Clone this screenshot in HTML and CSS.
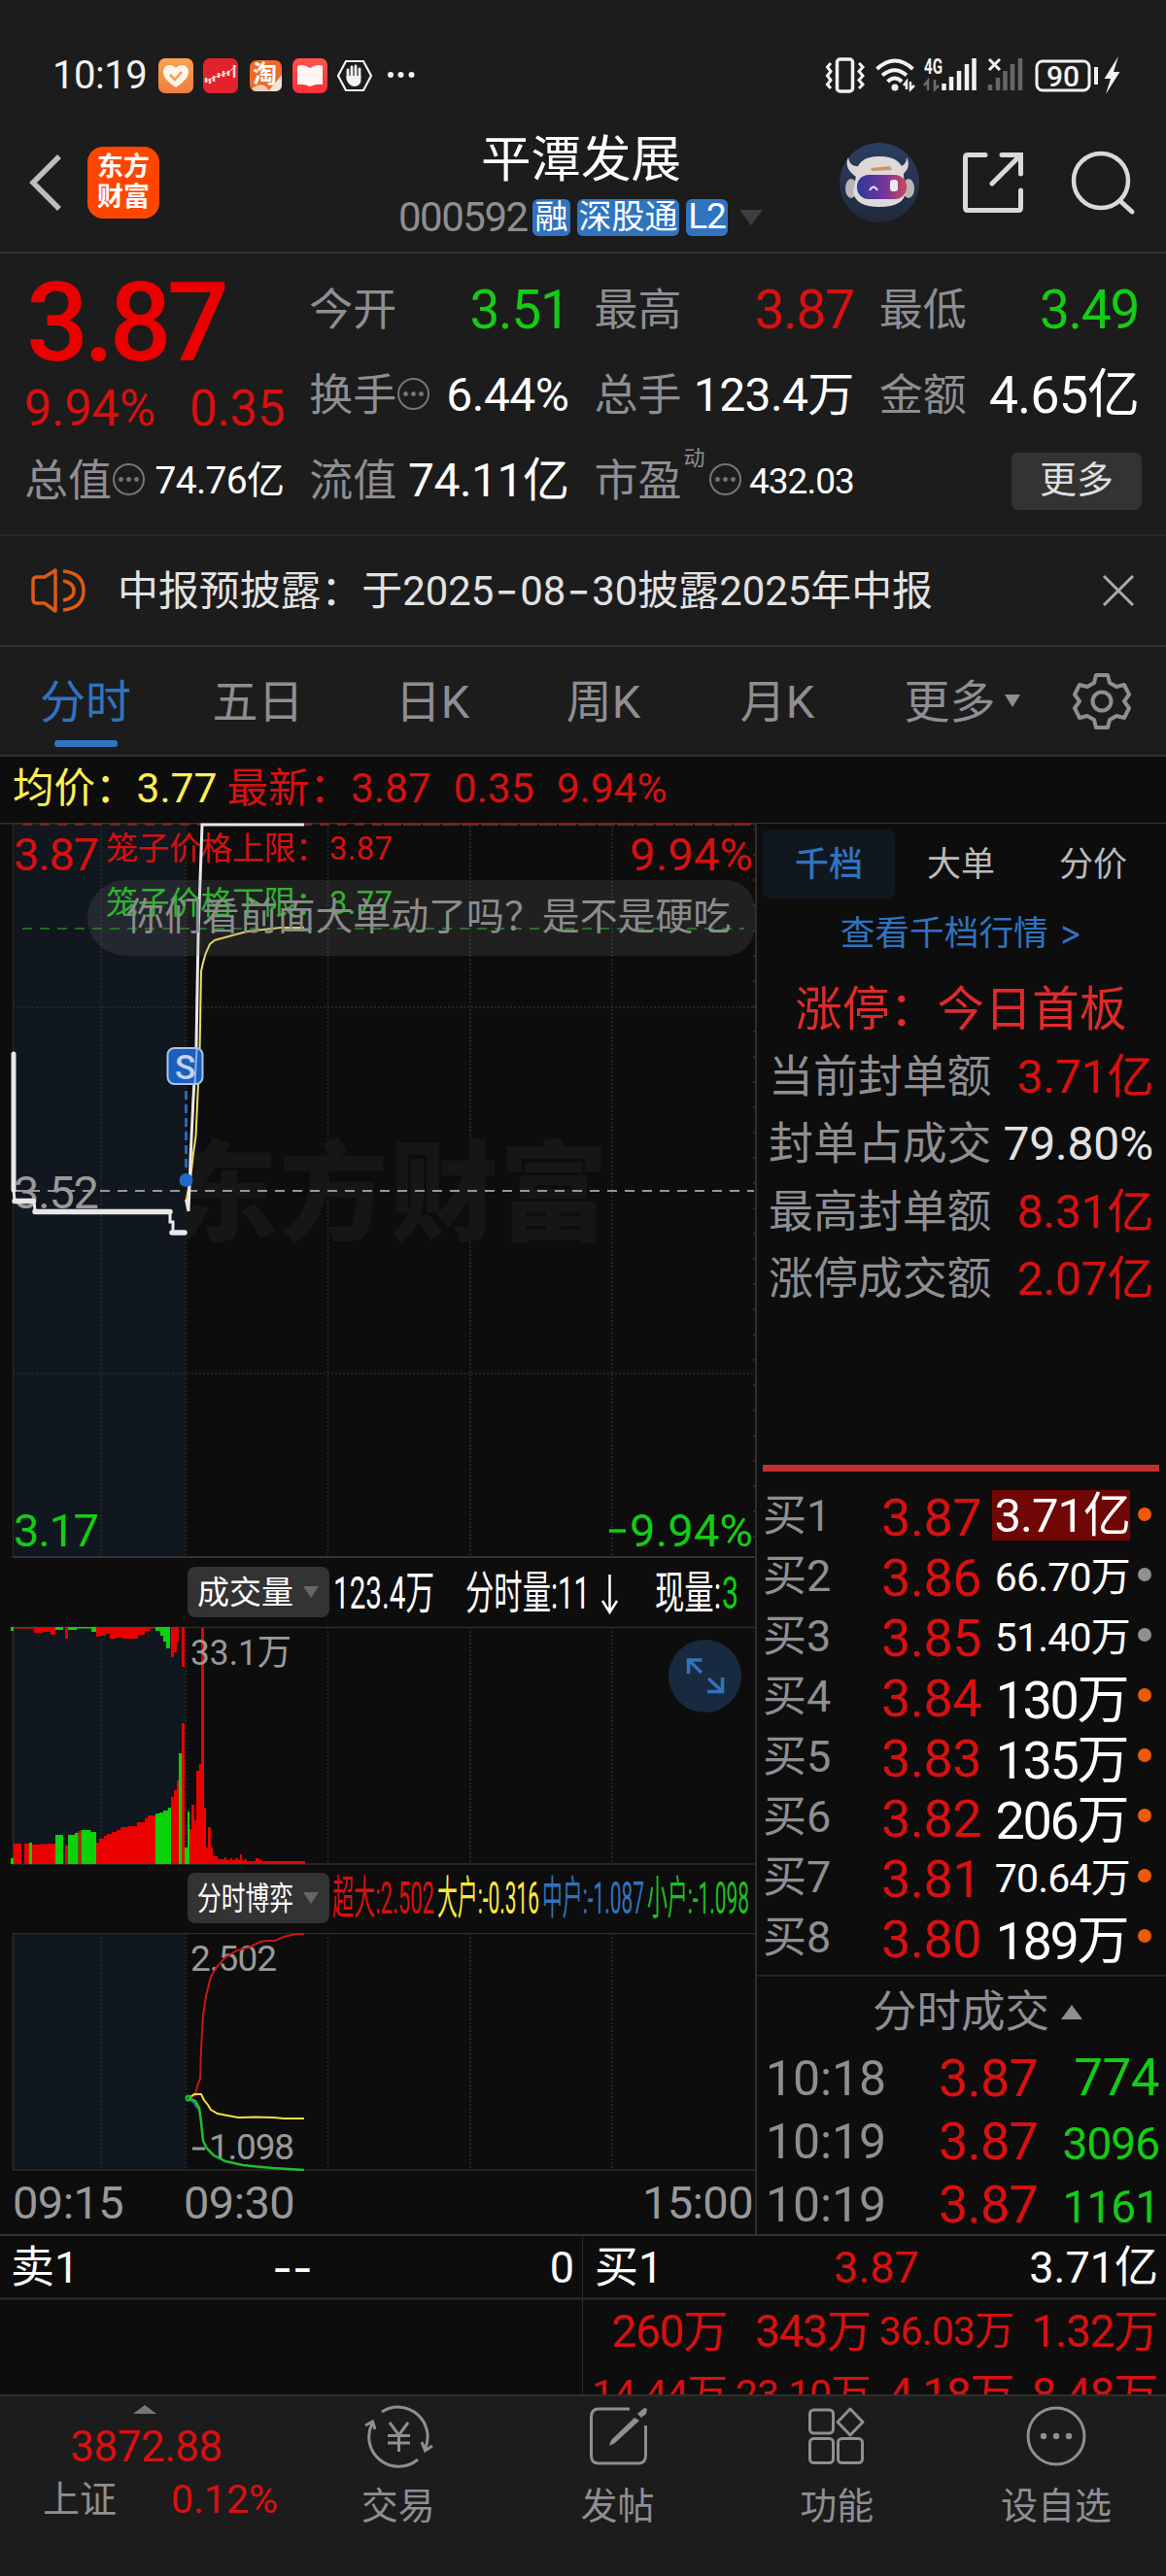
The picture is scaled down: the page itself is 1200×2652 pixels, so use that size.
FILE: index.html
```html
<!DOCTYPE html>
<html lang="zh-CN">
<head>
  <meta charset="UTF-8">
  <meta name="viewport" content="width=device-width, initial-scale=1.0">
  <title>平潭发展 000592</title>
  <link rel="stylesheet" href="styles.css">
</head>
<body>
  <div class="statusbar">
    <span class="clock">10:19</span>
    <svg class="status-left" width="270" height="44" viewBox="160 56 270 44">
      <defs>
        <linearGradient id="gOrange" x1="0" y1="0" x2="0" y2="1"><stop offset="0" stop-color="#f9a252"/><stop offset="1" stop-color="#f27c41"/></linearGradient>
        <linearGradient id="gRed" x1="0" y1="0" x2="0" y2="1"><stop offset="0" stop-color="#ff5350"/><stop offset="1" stop-color="#fb2f38"/></linearGradient>
      </defs>
      <rect x="163" y="60" width="36" height="36" rx="7" fill="url(#gOrange)"/>
      <path d="M181 90 C172 84 168 79 168 74 C168 66 177 65 181 70 C185 65 194 66 194 74 C194 79 190 84 181 90Z" fill="#fff6e8"/>
      <path d="M175 77 L180 82 L187 74" fill="none" stroke="#f59a55" stroke-width="2.5"/>
      <rect x="209" y="60" width="36" height="36" rx="7" fill="#e3232b"/>
      <path d="M212 85 V80 M216 86 V81 M220 84 V78 M225 80 V75 M230 79 V73 M235 78 V73 M241 80 V67" stroke="#ffd9d9" stroke-width="2.5" fill="none"/>
      <path d="M212 83 L225 78 L234 75 L243 68" stroke="#ffd9d9" stroke-width="1" fill="none"/>
      <rect x="257" y="62" width="33" height="32" rx="7" fill="#ee6a26"/>
      <path d="M290 77 L276 94 H283 Q290 94 290 87Z" fill="#f3e4d8"/>
      <path d="M259 91 Q272 82 277 94 H263Q260 94 259 91Z" fill="#f0cdb8"/>
      <text x="260" y="85" class="tao">淘</text>
      <rect x="301" y="60" width="36" height="36" rx="7" fill="url(#gRed)"/>
      <path d="M306 68 Q312 65 319 70 Q326 65 332 68 V87 Q326 86 319 89 Q312 86 306 87Z" fill="#fff5f3"/>
      <path d="M356 63 H374 L382 78 L374 93 H356 L348 78Z" fill="none" stroke="#f2f2f2" stroke-width="2.2"/>
      <path d="M358 80 V72 M362 80 V69 M366 80 V68 M370 80 V71" stroke="#f2f2f2" stroke-width="2.8" stroke-linecap="round"/>
      <path d="M356.6 78 H371.4 V84 Q370 89 364 89 Q359 88 356.6 82Z" fill="#f2f2f2"/>
      <circle cx="402" cy="77" r="3" fill="#f2f2f2"/><circle cx="412.500" cy="77" r="3" fill="#f2f2f2"/><circle cx="423.500" cy="77" r="3" fill="#f2f2f2"/>
    </svg>
    <svg class="status-right" width="310" height="44" viewBox="846 56 310 44">
      <g fill="none" stroke="#f2f2f2" stroke-width="3.500">
        <rect x="861.500" y="61" width="16" height="33" rx="3"/>
        <path d="M855 65 L851.500 69 L855 73.500 L851.500 78 L855 82.500 L851.500 87 L855 91 M884 65 L888 69 L884 73.500 L888 78 L884 82.500 L888 87 L884 91" stroke-width="3"/>
        <path d="M902.500 71 Q921 54 939.500 71 M908 77.500 Q921 67 933 77.500 M913.500 84 Q921 77 928 84" stroke-width="4"/>
        <rect x="1067" y="63" width="54" height="30" rx="6" stroke-width="3"/>
        <path d="M1018 61 L1029 72 M1029 61 L1018 72" stroke-width="3"/>
      </g>
      <circle cx="921" cy="90" r="3.500" fill="#f2f2f2"/>
      <path d="M933 92 V84 L930 88 M937 84 V92 L941 88" stroke="#f2f2f2" stroke-width="2.500" fill="none"/>
      <path d="M955 93 V83 L951 88 M962 82 V92 L966 88" stroke="#6b6b6b" stroke-width="2.500" fill="none"/>
      <text x="951" y="76" class="net" textLength="19" lengthAdjust="spacingAndGlyphs">4G</text>
      <path d="M971.500 93 V86 M979 93 V79 M987 93 V73 M995 93 V66 M1002.500 93 V60" stroke="#f2f2f2" stroke-width="4.500"/>
      <path d="M1019 93 V87 M1027 93 V80 M1034.500 93 V73 M1042 93 V66 M1050 93 V60" stroke="#666" stroke-width="4.500"/>
      <text x="1094" y="88.500" class="batt" text-anchor="middle">90</text>
      <path d="M1128 69 V87" stroke="#f2f2f2" stroke-width="4"/>
      <path d="M1151 58 L1136.500 81 H1143 L1138 97 L1152.500 74 H1146Z" fill="#f2f2f2"/>
    </svg>
  </div>

  <div class="header">
    <svg class="back" width="36" height="62" viewBox="28 157 36 62"><path d="M61 161 L34 188 L61 215" fill="none" stroke="#bdbdbd" stroke-width="5.500"/></svg>
    <div class="logo">东方<br>财富</div>
    <div class="title-box">
      <div class="name">平潭发展</div>
      <div class="code-row">
        <span class="code">000592</span>
        <span class="tag tag-rong">融</span>
        <span class="tag tag-sgt">深股通</span>
        <span class="tag tag-l2">L2</span>
        <span class="caret"></span>
      </div>
    </div>
    <svg class="robot" width="82" height="82" viewBox="0 0 82 82">
      <defs>
        <linearGradient id="gBg" x1="0" y1="0" x2="0" y2="1"><stop offset="0" stop-color="#2b3d60"/><stop offset="1" stop-color="#202a3c"/></linearGradient>
        <linearGradient id="gVisor" x1="0" y1="0" x2="1" y2="0"><stop offset="0" stop-color="#2c3a9c"/><stop offset=".55" stop-color="#74359c"/><stop offset="1" stop-color="#c94a5c"/></linearGradient>
      </defs>
      <circle cx="41" cy="41" r="41" fill="url(#gBg)"/>
      <path d="M9 15 Q4 26 17 35 L23 24 Q10 26 9 15Z M69 15 Q75 26 62 35 L57 24 Q69 26 69 15Z" fill="#d9d6d4"/>
      <ellipse cx="12" cy="47" rx="6" ry="10" fill="#b9b6b8"/><ellipse cx="71" cy="47" rx="6" ry="10" fill="#b9b6b8"/>
      <path d="M17 34 Q17 14 41 14 Q66 14 66 34 L68 50 Q67 66 41 66 Q16 66 14 50Z" fill="#dddad9"/>
      <rect x="18" y="33" width="51" height="25" rx="12" fill="url(#gVisor)"/>
      <path d="M31 49 Q35 42 39 49" fill="none" stroke="#dfe0ff" stroke-width="2"/>
      <rect x="52" y="38" width="8" height="12" rx="3" fill="#efe9f5"/>
      <path d="M32 26 L52 24 L54 28 L33 29Z" fill="#c9976d"/>
    </svg>
    <svg class="share" width="66" height="66" viewBox="989 155 66 66">
      <path d="M1014 159.500 H996 Q993.500 159.500 993.500 162 V214 Q993.500 216.500 996 216.500 H1048 Q1050.500 216.500 1050.500 214 V196 M1031 159.500 H1050.500 V179 M1050 160 L1021 189" fill="none" stroke="#d9d9d9" stroke-width="5" stroke-linecap="round"/>
    </svg>
    <svg class="search" width="68" height="68" viewBox="1102 153 68 68">
      <circle cx="1133" cy="185" r="28" fill="none" stroke="#d9d9d9" stroke-width="4.500"/>
      <path d="M1153 206 L1165 217" stroke="#d9d9d9" stroke-width="5" stroke-linecap="round"/>
    </svg>
  </div>

  <div class="quote">
    <div class="q-price">
      <div class="big">3.87</div>
      <div class="chg"><span>9.94%</span><span>0.35</span></div>
    </div>
    <div class="q"><label>今开</label><b class="v54 green">3.51</b></div>
    <div class="q"><label>最高</label><b class="v54 red">3.87</b></div>
    <div class="q"><label>最低</label><b class="v54 green">3.49</b></div>
    <div class="q"><label>换手</label><i class="dots"></i><b class="v48">6.44%</b></div>
    <div class="q"><label>总手</label><b class="v47">123.4万</b></div>
    <div class="q"><label>金额</label><b class="v53">4.65亿</b></div>
    <div class="q"><label>总值</label><i class="dots"></i><b class="v39">74.76亿</b></div>
    <div class="q"><label>流值</label><b class="v48 tight">74.11亿</b></div>
    <div class="q"><label>市盈</label><sup>动</sup><i class="dots"></i><b class="v36">432.03</b></div>
    <div class="q q-end"><span class="more-btn">更多</span></div>
  </div>

  <div class="notice">
    <svg width="58" height="50" viewBox="31 583 58 50">
      <path d="M57 587 L46 594 H38 Q34 594 34 598 V617 Q34 621 38 621 H46 L57 629Z M65 588 Q86 590 86 608 Q86 626 65 628 M65 598 Q76 600 76 608 Q76 616 65 618" fill="none" stroke="#dc5b14" stroke-width="3.500" stroke-linejoin="round"/>
    </svg>
    <span class="notice-text">中报预披露：于2025<i>-</i>08<i>-</i>30披露2025年中报</span>
    <svg class="close" width="36" height="36" viewBox="0 0 36 36"><path d="M3 3 L33 33 M33 3 L3 33" stroke="#ababab" stroke-width="3"/></svg>
  </div>

  <div class="tabs">
    <span class="tab on">分时</span>
    <span class="tab">五日</span>
    <span class="tab">日K</span>
    <span class="tab">周K</span>
    <span class="tab">月K</span>
    <span class="tab tab-more">更多<i></i></span>
    <svg class="gear" width="60" height="60" viewBox="0 0 60 60">
      <path d="M24 3 H36 L38 11 L45 15 L53 13 L58 23 L53 30 L58 37 L53 47 L45 45 L38 49 L36 57 H24 L22 49 L15 45 L7 47 L2 37 L7 30 L2 23 L7 13 L15 15 L22 11Z" fill="none" stroke="#8e8e93" stroke-width="4" stroke-linejoin="round"/>
      <circle cx="30" cy="30" r="9.500" fill="none" stroke="#8e8e93" stroke-width="4"/>
    </svg>
  </div>

  <div class="avg-row">
    <span class="yellow">均价：3.77</span>
    <span class="red">最新：3.87</span>
    <span class="red">0.35</span>
    <span class="red">9.94%</span>
  </div>

  <div class="main">
    <div class="charts">
      <div class="price-box">
      <svg class="chart" width="777" height="757" viewBox="0 847 777 757">
        <rect x="13" y="847" width="178" height="757" fill="#10171f"/>
        <path class="wm-grid" d="M104 847 V1604 M191.500 847 V1604 M337.500 847 V1604 M484 847 V1604 M630 847 V1604 M13 1037 H776 M13 1414 H776"/>
        <text x="174" y="1269" class="wm" textLength="452">东方财富</text>
        <path d="M13.500 847 V1604" stroke="#2b2e31" stroke-width="1"/>
        <path d="M0 847.500 H777 M13 1603 H777" stroke="#333" stroke-width="2"/>
        <path d="M23 848.500 H395" stroke="#7c2020" stroke-width="3" stroke-dasharray="10 8"/>
        <path d="M395 848.500 H776" stroke="#7c2020" stroke-width="3" stroke-dasharray="18 2"/>
        <path d="M776 853 V1600" stroke="#5c1414" stroke-width="2" stroke-dasharray="2 24"/>
        <path d="M23 956 H766" stroke="#1e6b22" stroke-width="2" stroke-dasharray="10 8"/>
        <path d="M13 1226 H776" stroke="#979797" stroke-width="2" stroke-dasharray="10 8"/>
        <g class="t46">
          <text x="14" y="896" class="f-red" textLength="88">3.87</text>
          <text x="775" y="896" class="f-red" text-anchor="end" textLength="127">9.94%</text>
          <text x="14" y="1244" fill="#999" textLength="88">3.52</text>
          <text x="14" y="1592" class="f-green" textLength="88">3.17</text>
          <text x="775" y="1592" class="f-green" text-anchor="end" textLength="127">9.94%</text>
          <path d="M627 1576 H644" stroke="#14cc14" stroke-width="3.500"/>
        </g>
        <g class="t33">
          <text x="109" y="885" class="f-red" textLength="228">笼子价格上限：</text><text x="339" y="885" class="f-red" textLength="65">3.87</text>
          <text x="109" y="941" class="f-green2" textLength="228">笼子价格下限：</text><text x="339" y="941" class="f-green2" textLength="65">3.77</text>
        </g>
        <path d="M191.500 1237 L196.500 1210 L199 1187 L201.500 1170 L205.500 1083 L207 1000 L208.500 993 L211.500 982 L216 972 L221 968 L239 963 L254 959 L271 957 L289 955 L313 955" fill="none" stroke="#ede05a" stroke-width="2"/>
        <path d="M14 1084 V1225 L15 1236 H35 L36 1247 H175 V1258 H178 V1269 H191" fill="none" stroke="#e8e8e8" stroke-width="3"/>
        <path d="M14 1085 V1225" stroke="#e8e8e8" stroke-width="5" stroke-linecap="round"/>
        <path d="M15 1236.500 H34 M36 1247.500 H175 M177 1269 H190" stroke="#e8e8e8" stroke-width="5.500" stroke-linecap="round"/>
        <path d="M191.500 1235 L194 1247 L196.500 1182 L199 1130 L202 1077 L204 963 L208 849 H313" fill="none" stroke="#e8e8e8" stroke-width="3"/>
        <path d="M191.500 1123 V1206" stroke="#2268c8" stroke-width="3" stroke-dasharray="9 5"/>
        <circle cx="191.500" cy="1215" r="7" fill="#2268c8"/>
        <rect x="172.500" y="1079" width="36" height="37" rx="7" fill="#1b5fbd" stroke="#a9c3e8" stroke-width="2"/>
        <path d="M202.500 1080 L200.500 1115" stroke="#8fb2ea" stroke-width="2"/>
        <text x="190.500" y="1111" class="s-mark" text-anchor="middle">S</text>
      </svg>
      <div class="danmu">你们看前面大单动了吗？是不是硬吃</div>
      </div>

      <div class="sub-head">
        <span class="picker"><em class="cjk33">成交量</em><i></i></span>
        <svg class="legend" width="436" height="60" viewBox="341 1609 436 60">
          <g class="t46" fill="#fff">
            <text x="343" y="1656" textLength="104" lengthAdjust="spacingAndGlyphs">123.4万</text>
            <text x="479" y="1656" textLength="128" lengthAdjust="spacingAndGlyphs">分时量:11</text>
            <path d="M627.500 1621 V1660 M620 1648 L627.500 1660 L635 1648" fill="none" stroke="#fff" stroke-width="2.500"/>
            <text x="674" y="1656" textLength="68" lengthAdjust="spacingAndGlyphs">现量:</text>
            <text x="743" y="1656" class="f-green" textLength="17" lengthAdjust="spacingAndGlyphs">3</text>
          </g>
        </svg>
      </div>

      <div class="price-box">
      <svg class="chart" width="777" height="246" viewBox="0 1674 777 246">
        <rect x="13" y="1675" width="178" height="244" fill="#10171f"/>
        <path class="wm-grid" d="M104 1675 V1919 M191.500 1675 V1919 M337.500 1675 V1919 M484 1675 V1919 M630 1675 V1919"/>
        <path d="M13.500 1675 V1919 M13 1675.500 H777 M13 1919 H777" stroke="#2c2c2c" stroke-width="1.500"/>
        <!-- matched volume, from the bottom -->
        <path fill="#eb0000" d="M14 1919 V1898 H22 V1919Z M25 1919 V1898 H30 V1919Z M33 1919 V1899 H41 V1898.500 H49 V1898 H57 V1919Z M67 1919 V1900 H70 V1919Z M80.500 1919 V1885 H83.500 V1919Z
          M99 1919 V1897 H102 V1893 H107 V1890 H110 V1888 H115 V1886 H120 V1884 H124 V1881 H132 V1880 H141 V1876 H149 V1872 H152 V1869 H160 V1919Z
          M176 1919 V1850 H179 V1843 H182 V1833 H184 V1919Z M187 1919 V1774 H190 V1919Z
          M195 1919 V1883 H197 V1858 H200 V1874 H202 V1823 H205 V1816 H207 V1676 H210 V1861 H212 V1902 H214 V1881 H217 V1902 H219 V1911 H224 V1914 H231 V1912 H233 V1915 H237 V1913 H239 V1915 H242 V1913 H245 V1915 H247 V1909 H249 V1915 H252 V1914 H254 V1916 H263 V1913 H267 V1915 H270 V1916 H314 V1919Z"/>
        <path fill="#0bd30b" d="M11 1919 V1913 H14 V1919Z M30 1919 V1897 H33 V1919Z M57 1919 V1889 H65 V1919Z M70 1919 V1889 H77 V1887 H80.500 V1919Z M83.500 1919 V1884 H93.500 V1886 H99 V1919Z
          M160 1919 V1867 H164 V1866 H168 V1864 H173 V1861 H176 V1919Z M184 1919 V1805 H187 V1919Z M190 1919 V1902 H193 V1865 H195 V1919Z"/>
        <!-- unmatched volume, hanging from the top -->
        <path fill="#eb0000" d="M14 1675 H35 V1676.500 H14Z M35 1675 H57 V1683 H52 V1680 H44 V1681 H35Z M67 1675 H70 V1687 H67Z M99 1675 H162 V1676.500 H154 V1679 H149 V1683 H142 V1687 H126 V1686 H120 V1687 H113 V1682 H109 V1684 H102 V1685 H99Z M176 1675 H184 V1690 H182 V1701 H179 V1706 H176Z M187 1675 H190 V1716 H187Z"/>
        <path fill="#0bd30b" d="M11 1675 H14 V1679 H11Z M57 1675 H65 V1678 H57Z M70 1675 H99 V1680 H94 V1676.500 H79 V1678 H70Z M160 1675 H175 V1697 H171 V1690 H168 V1684 H165 V1679 H160Z"/>
        <text x="196" y="1714" class="t37" textLength="104" lengthAdjust="spacingAndGlyphs">33.1万</text>
        <circle cx="725.500" cy="1725.500" r="37.500" fill="#182a40"/>
        <path d="M708.500 1723 V1709 H722.500 M709 1709.500 L722 1722 M743.500 1727 V1741.500 H728 M743 1741 L729 1728" fill="none" stroke="#3073bf" stroke-width="3.500"/>
      </svg>
      </div>

      <div class="sub-head sub-head2">
        <span class="picker"><em class="cjk33 four">分时博弈</em><i></i></span>
        <svg class="legend" width="436" height="60" viewBox="341 1923 436 60">
          <g class="t48">
            <text x="342" y="1969" class="f-red" textLength="105" lengthAdjust="spacingAndGlyphs">超大:2.502</text>
            <text x="450" y="1969" fill="#ffe93b" textLength="105" lengthAdjust="spacingAndGlyphs">大户:-0.316</text>
            <text x="558" y="1969" fill="#3073bf" textLength="105" lengthAdjust="spacingAndGlyphs">中户:-1.087</text>
            <text x="666" y="1969" class="f-green2" textLength="105" lengthAdjust="spacingAndGlyphs">小户:-1.098</text>
          </g>
        </svg>
      </div>

      <svg class="chart" width="777" height="245" viewBox="0 1990 777 245">
        <rect x="13" y="1990" width="178" height="244" fill="#10171f"/>
        <path class="wm-grid" d="M104 1990 V2234 M191.500 1990 V2234 M337.500 1990 V2234 M484 1990 V2234 M630 1990 V2234"/>
        <path d="M13.500 1990 V2234 M13 1990.500 H777 M13 2234 H777" stroke="#2c2c2c" stroke-width="1.500"/>
        <text x="196" y="2029" class="t37" textLength="89">2.502</text>
        <text x="215" y="2223" class="t37" textLength="88">1.098</text>
        <path d="M198 2212 H211" stroke="#999" stroke-width="3"/>
        <g fill="none" stroke-width="2">
          <path stroke="#c81616" d="M194 2160 L201 2157 L203 2148 L206 2140 L207 2110 L209 2075 L212 2055 L217 2035 L223 2025 L232 2015 L244 2008 L256 2005 L268 1999 L275 1998 L283 1998 L292 1994 L305 1991 L313 1991"/>
          <path stroke="#3073bf" d="M194 2160 L199 2164 L203 2170 L206 2172"/>
          <path stroke="#f0e23c" d="M194 2160 L200 2156 L207 2156 L210 2162 L214 2167 L217 2172 L224 2176 L240 2179 L245 2180 L262 2179.500 L282 2180 L292 2181 L313 2181"/>
          <path stroke="#1fbf2c" stroke-width="2.500" d="M194 2160 L201 2163 L205 2170 L207 2185 L209 2204 L213 2212 L220 2219 L232 2225 L250 2229 L280 2232 L313 2234"/>
          <circle cx="194" cy="2160" r="2.500" stroke="#1fbf2c"/>
        </g>
      </svg>
      <div class="times"><span>09:15</span><span>09:30</span><span>15:00</span></div>
    </div>

    <div class="side">
      <div class="side-tabs"><span class="on">千档</span><span>大单</span><span>分价</span></div>
      <div class="side-link">查看千档行情 <i>&gt;</i></div>
      <div class="side-title">涨停：今日首板</div>
      <div class="stat"><span>当前封单额</span><b class="red">3.71亿</b></div>
      <div class="stat"><span>封单占成交</span><b class="pct">79.80%</b></div>
      <div class="stat"><span>最高封单额</span><b class="red">8.31亿</b></div>
      <div class="stat"><span>涨停成交额</span><b class="red">2.07亿</b></div>
      <div class="side-line"></div>

      <div class="book">
        <div class="lv"><span>买1</span><b>3.87</b><em class="hot">3.71亿</em><i class="o"></i></div>
        <div class="lv"><span>买2</span><b>3.86</b><em class="sm">66.70万</em><i></i></div>
        <div class="lv"><span>买3</span><b>3.85</b><em class="sm">51.40万</em><i></i></div>
        <div class="lv"><span>买4</span><b>3.84</b><em>130万</em><i class="o"></i></div>
        <div class="lv"><span>买5</span><b>3.83</b><em>135万</em><i class="o"></i></div>
        <div class="lv"><span>买6</span><b>3.82</b><em>206万</em><i class="o"></i></div>
        <div class="lv"><span>买7</span><b>3.81</b><em class="sm">70.64万</em><i class="o"></i></div>
        <div class="lv"><span>买8</span><b>3.80</b><em>189万</em><i class="o"></i></div>
      </div>

      <div class="deal-title">分时成交<i></i></div>
      <div class="deal"><span>10:18</span><b>3.87</b><em>774</em></div>
      <div class="deal"><span>10:19</span><b>3.87</b><em class="sm">3096</em></div>
      <div class="deal"><span>10:19</span><b>3.87</b><em class="sm">1161</em></div>
    </div>
  </div>

  <div class="first-level">
    <div class="half"><span>卖1</span><span class="dash">--</span><span>0</span></div>
    <div class="half buy"><span>买1</span><span class="mid red">3.87</span><span>3.71亿</span></div>
  </div>
  <div class="queue">
    <div class="queue-sell"></div>
    <div class="queue-buy">
      <span>260万</span><span>343万</span><span class="sm">36.03万</span><span>1.32万</span>
      <span class="sm">14.44万</span><span class="sm">23.10万</span><span>4.18万</span><span>8.48万</span>
    </div>
  </div>

  <div class="nav">
    <div class="index">
      <i class="up"></i>
      <div class="idx-val">3872.88</div>
      <div class="idx-row"><span>上证</span><b>0.12%</b></div>
    </div>
    <div class="item">
      <svg width="74" height="66" viewBox="373 2475 74 66">
        <path d="M393 2483 A30.500 30.500 0 0 1 437 2522 M430 2532 A30.500 30.500 0 0 1 383 2495 M376 2497 L383.500 2493 L386 2501 M434 2514 L437.500 2523 L445 2518" fill="none" stroke="#8e8e93" stroke-width="3"/>
        <path d="M401 2494 L410.500 2507 L420 2494 M410.500 2507 V2524 M399 2507.500 H422 M399 2515 H422" fill="none" stroke="#8e8e93" stroke-width="3"/>
      </svg>
      <span>交易</span>
    </div>
    <div class="item">
      <svg width="74" height="66" viewBox="599 2475 74 66">
        <path d="M648 2480 H616 Q608.500 2480 608.500 2488 V2528 Q608.500 2536 616 2536 H657 Q664.500 2536 664.500 2528 V2497" fill="none" stroke="#8e8e93" stroke-width="3"/>
        <path d="M653 2489 L658 2492 L633 2515 L627 2518 L629 2512Z M656 2485 L663 2479 L666 2480 L665 2485 L660 2489Z" fill="#8e8e93"/>
      </svg>
      <span>发帖</span>
    </div>
    <div class="item">
      <svg width="74" height="66" viewBox="825 2475 74 66">
        <g fill="none" stroke="#8e8e93" stroke-width="3"><rect x="834.500" y="2481" width="24" height="24" rx="4"/><rect x="834.500" y="2510.500" width="24" height="25" rx="4"/><rect x="863.500" y="2510.500" width="25" height="25" rx="4"/><path d="M876 2480 L889 2493.500 L876 2507 L863 2493.500Z" stroke-linejoin="round"/></g>
      </svg>
      <span>功能</span>
    </div>
    <div class="item">
      <svg width="74" height="66" viewBox="1050 2475 74 66">
        <circle cx="1087" cy="2508" r="29" fill="none" stroke="#8e8e93" stroke-width="3"/>
        <circle cx="1074" cy="2508" r="3.200" fill="#8e8e93"/><circle cx="1087" cy="2508" r="3.200" fill="#8e8e93"/><circle cx="1100" cy="2508" r="3.200" fill="#8e8e93"/>
      </svg>
      <span>设自选</span>
    </div>
  </div>
</body>
</html>
```
FILE: styles.css
```css
* { box-sizing: border-box; }
body { margin: 0; width: 1200px; height: 2652px; overflow: hidden; background: #1c1c1c; color: #fff; font-family: Roboto, "Noto Sans CJK SC", sans-serif; line-height: 1; }
b, i, em { font-weight: 400; font-style: normal; }
svg { display: block; flex: none; }
.red { color: #d81010; }
.green { color: #14cc14; }
.yellow { color: #ffee55; }

/* status bar */
.statusbar { display: flex; align-items: center; height: 130px; padding: 26px 44px 0 54px; color: #f2f2f2; }
.clock { width: 106px; font-size: 40px; line-height: 44px; letter-spacing: -.5px; }
.status-right { margin-left: auto; }
.tao { font: 700 25px "Noto Sans CJK SC", sans-serif; fill: #fff; }
.net { font-size: 22px; font-weight: 700; fill: #f2f2f2; }
.batt { font-size: 30px; font-weight: 500; fill: #f2f2f2; }

/* header */
.header { display: flex; align-items: center; height: 131px; padding: 0 30px 14px 28px; border-bottom: 2px solid #303030; }
.logo { width: 74px; height: 74px; margin-left: 26px; border-radius: 16px; background: #ff4600; font-size: 27px; font-weight: 700; line-height: 31px; text-align: center; padding-top: 6px; }
.title-box { flex: 1; padding: 2px 0 0 246px; }
.name { height: 70px; padding-left: 85px; font-size: 51.500px; line-height: 60px; white-space: nowrap; }
.code-row { display: flex; align-items: center; height: 38px; }
.code { width: 138px; font-size: 42px; color: #8e8e93; letter-spacing: -1.5px; }
.tag { height: 38px; border-radius: 6px; background: #3073bf; font-size: 34px; line-height: 36px; text-align: center; margin-right: 7px; white-space: nowrap; }
.tag-rong { width: 39px; }
.tag-sgt { width: 105px; }
.tag-l2 { width: 43px; font-size: 37px; letter-spacing: -1px; }
.caret { margin-left: 5px; border: 12px solid transparent; border-top: 16px solid #3d3d3d; border-bottom: 0; }
.share { margin-left: 43px; }
.search { margin-left: 47px; }

/* quote */
.quote { display: grid; grid-template-columns: repeat(4, minmax(0, 1fr)); grid-template-rows: 88px 88px 88px; column-gap: 26px; height: 291px; padding: 14px 28px 0 25px; border-bottom: 2px solid #282828; }
.q-price { grid-row: 1 / 3; color: #eb0000; }
.big { padding-left: 2px; font-size: 113px; font-weight: 500; line-height: 115px; letter-spacing: -5px; white-space: nowrap; }
.chg { display: flex; gap: 35px; font-size: 51px; line-height: 60px; margin-top: 1px; color: #d81010; white-space: nowrap; letter-spacing: -.3px; }
.q { display: flex; align-items: center; white-space: nowrap; min-width: 0; }
.q label { font-size: 45px; color: #8e8e93; }
.q b { margin-left: auto; }
.q sup { font-size: 22px; color: #8e8e93; align-self: flex-start; margin: 8px 3px 0 2px; line-height: 26px; }
.dots { width: 33px; height: 33px; margin: -4px 0 0 1px; border: 2px solid #76767a; border-radius: 50%; background: radial-gradient(circle, #76767a 2px, transparent 2.8px) 0 0 / 8px 29px repeat-x; background-position: 2.5px 0; background-clip: content-box; padding: 0 3px; }
.v54 { font-size: 55px; letter-spacing: -1.3px; }
.v53 { font-size: 54px; letter-spacing: -1px; }
.v48 { font-size: 48px; letter-spacing: -.5px; }
.v47 { font-size: 48px; letter-spacing: -.6px; }
.v39 { font-size: 39px; letter-spacing: -.7px; }
.v36 { font-size: 37px; letter-spacing: -1px; }
.tight { letter-spacing: -.5px; }
.q-end { justify-content: flex-end; }
.more-btn { width: 134px; height: 59px; border-radius: 7px; background: #333; color: #dedede; font-size: 38px; line-height: 57px; text-align: center; margin-right: -3px; }

/* notice */
.notice { display: flex; align-items: center; height: 114px; padding: 0 31px 0 31px; border-bottom: 2px solid #323232; }
.notice-text { margin-left: 32px; font-size: 41.900px; color: #e2e2e2; white-space: nowrap; }
.notice-text i { display: inline-block; font-family: Inter, sans-serif; margin: 0 1.800px; transform: scaleX(1.25); padding: 0 2px; }
.close { margin-left: auto; }

/* period tabs */
.tabs { display: grid; grid-template-columns: 176px 179px 180px 172px 186px 194px 1fr; align-items: center; height: 113px; border-bottom: 2px solid #323232; }
.tab { position: relative; height: 111px; line-height: 113px; font-size: 47px; color: #8e8e93; text-align: center; white-space: nowrap; }
.tab.on { color: #3073bf; }
.tab.on::after { content: ""; position: absolute; left: 56px; bottom: 8px; width: 65px; height: 7px; border-radius: 3px; background: #3073bf; }
.tab-more i { display: inline-block; margin: 0 0 11px 9px; border: 8px solid transparent; border-top: 13px solid #8e8e93; border-bottom: 0; }
.gear { margin-left: 17px; }

.avg-row { display: flex; height: 68px; padding: 0 13px; background: #0d0d0d; font-size: 42.500px; line-height: 66px; white-space: nowrap; }
.avg-row span { margin-right: 10px; }
.avg-row span:nth-child(n+3) { margin-left: 13px; }

/* charts */
.main { display: flex; height: 1453px; background: #0d0d0d; }
.charts { width: 777px; }
.price-box { position: relative; }
.chart { overflow: hidden; }
.wm-grid { fill: none; stroke: #292b2d; stroke-width: 1.500; stroke-dasharray: 2 2; }
.wm { font-size: 112px; font-weight: 900; fill: #161616; }
.f-red { fill: #d81010; }
.f-green { fill: #14cc14; }
.f-green2 { fill: #20c020; }
.t46 { font-size: 47px; }
.t48 { font-size: 47px; }
.t33 { font-size: 33px; }
.t37 { font-size: 37px; fill: #999; }
.s-mark { font-size: 35px; font-weight: 500; fill: #c4d4ec; }
.danmu { position: absolute; left: 90px; top: 59px; width: 687px; height: 78px; border-radius: 39px 30px 30px 39px; background: rgba(120, 120, 120, .18); color: #8c8c8c; font-size: 38.900px; line-height: 76px; padding-left: 40px; white-space: nowrap; }
.sub-head { display: flex; align-items: center; height: 70px; padding-left: 193px; }
.picker { display: flex; align-items: center; width: 146px; height: 52px; border-radius: 8px; background: #333; padding-left: 10px; flex: none; }
.picker em { font-size: 33px; width: 98px; white-space: nowrap; }
.picker .four { font-size: 33px; transform: scaleX(.75); transform-origin: 0 50%; }
.picker i { margin-left: 11px; border: 8px solid transparent; border-top: 12px solid #666; border-bottom: 0; }
.legend { margin-left: 2px; overflow: visible; }
.sub-head2 { padding-bottom: 2px; }
.times { display: flex; height: 65px; padding: 0 2px 0 13px; font-size: 47px; line-height: 65px; color: #999; letter-spacing: -.6px; }
.times span:nth-child(2) { margin-left: 62px; }
.times span:last-child { margin-left: auto; }

/* right column */
.side { width: 423px; border-left: 2px solid #2e2e2e; border-top: 1px solid #333; padding: 0 7px 0 6px; }
.side-tabs { display: grid; grid-template-columns: repeat(3, 136px); margin-top: 6px; }
.side-tabs span { height: 71px; line-height: 74px; font-size: 35px; text-align: center; color: #bbb; border-radius: 8px; }
.side-tabs .on { background: #10171f; color: #3073bf; font-weight: 500; }
.side-link { height: 70px; line-height: 70px; font-size: 35.700px; color: #3073bf; text-align: center; white-space: nowrap; }
.side-link i { display: inline-block; margin-left: 2px; font-family: Inter, sans-serif; }
.side-title { height: 79px; line-height: 89px; font-size: 48.500px; color: #e02a2a; text-align: center; letter-spacing: .3px; white-space: nowrap; }
.stat { display: flex; justify-content: space-between; align-items: center; height: 69.500px; padding: 0 6px 0 6px; font-size: 45.900px; color: #8e8e93; white-space: nowrap; }
.stat b { font-size: 48px; letter-spacing: -.2px; }
.stat .pct { color: #e2e2e2; }
.side-line { height: 7px; margin: 156px 0 17px; background: #c03030; }
.lv { display: flex; align-items: center; height: 62px; white-space: nowrap; }
.lv span { width: 122px; font-size: 45px; color: #8e8e93; padding-bottom: 6px; }
.lv b { width: 114px; font-size: 54px; color: #d81010; letter-spacing: -.6px; }
.lv em { width: 142px; height: 52px; line-height: 56px; font-size: 54px; text-align: right; letter-spacing: -2.400px; padding-right: 3px; display: flex; justify-content: flex-end; }
.lv .sm { font-size: 41px; letter-spacing: -.8px; line-height: 50px; padding-right: 0; }
.lv .hot { background: #6f0706; font-size: 49px; letter-spacing: -1px; line-height: 54px; padding-right: 0; margin-top: -6px; }
.lv i { width: 14px; height: 14px; margin: 0 0 8px 8px; border-radius: 50%; background: #8e8e93; }
.lv .o { background: #ee5a05; }
.deal-title { height: 75px; margin: 5px -7px 0 -6px; border-top: 2px solid #222; line-height: 74px; padding-left: 119px; font-size: 45.500px; color: #8e8e93; white-space: nowrap; }
.deal-title i { display: inline-block; margin: 0 0 8px 12px; border: 11.500px solid transparent; border-bottom: 15px solid #8e8e93; border-top: 0; }
.deal { display: flex; align-items: center; height: 65px; padding-bottom: 2px; }
.deal span { width: 181px; padding-left: 3px; font-size: 50px; color: #8e8e93; letter-spacing: -.1px; }
.deal b { font-size: 54px; color: #d81010; letter-spacing: -.8px; }
.deal em { margin-left: auto; font-size: 53px; color: #14cc14; letter-spacing: -.5px; }
.deal .sm { font-size: 46px; letter-spacing: -1px; padding-top: 5px; }

/* best bid / ask */
.first-level { display: flex; height: 68px; background: #0d0d0d; border-top: 2px solid #333; border-bottom: 3px solid #262626; }
.half { display: grid; grid-template-columns: 1fr 1fr 1fr; align-items: center; width: 600px; padding: 0 8px 0 11px; border-right: 1px solid #2a2a2a; font-size: 45px; line-height: 65px; }
.half span:last-child { text-align: right; }
.half .dash { font-family: Inter, sans-serif; text-align: center; }
.buy { border: 0; padding-left: 12px; }
.buy .mid { text-align: center; }
.queue { display: flex; height: 97px; overflow: hidden; background: #0d0d0d; }
.queue-sell { width: 600px; border-right: 1px solid #2a2a2a; }
.queue-buy { display: grid; grid-template-columns: repeat(4, 147.700px); grid-auto-rows: 65px; width: 593px; height: 97px; }
.queue-buy span { font-size: 46px; line-height: 65px; color: #d81010; text-align: right; letter-spacing: -1.300px; white-space: nowrap; display: flex; justify-content: flex-end; }
.queue-buy .sm { font-size: 41px; letter-spacing: -.9px; }

/* bottom nav */
.nav { display: flex; height: 187px; background: #1c1c1c; border-top: 2px solid #2e2e2e; color: #8e8e93; }
.index { width: 297px; padding-top: 9px; display: flex; flex-direction: column; align-items: center; }
.up { border: 12px solid transparent; border-bottom: 9px solid #77777b; border-top: 0; }
.idx-val { margin-top: 10px; padding-left: 4px; font-size: 44px; line-height: 48px; color: #d81010; letter-spacing: -.5px; }
.idx-row { display: flex; align-items: center; gap: 56px; margin: 5px 0 0 34px; font-size: 38px; line-height: 50px; align-self: stretch; padding-left: 10px; }
.idx-row b { font-size: 41px; color: #d81010; }
.item { width: 225.700px; padding-top: 8px; display: flex; flex-direction: column; align-items: center; font-size: 38px; }
.item span { line-height: 50px; margin-top: 14px; }
```
